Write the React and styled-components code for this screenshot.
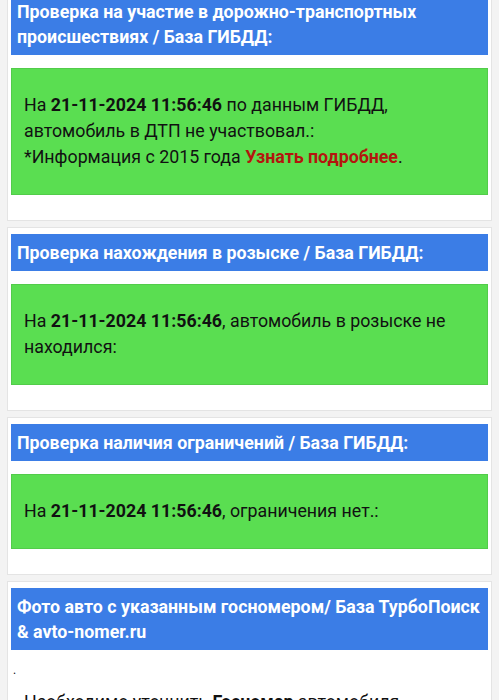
import React from 'react'
import styled, { createGlobalStyle } from 'styled-components'

const GlobalStyle = createGlobalStyle`
  html, body {
    margin: 0;
    padding: 0;
    background: #f3f3f3;
    font-family: Roboto, "Noto Sans", sans-serif;
    overflow: hidden;
  }
`

const Page = styled.div`
  display: flex;
  flex-direction: column;
  gap: 6px;
  padding: 0 7px;
  margin-top: -14px;
`

const Card = styled.section`
  background: #fff;
  border: 1px solid #e4e4e4;
  padding: 6px 3px 25px;
`

const Header = styled.h3`
  margin: 0;
  background: #3b7de6;
  color: #fff;
  font-size: 17.8px;
  font-weight: 700;
  line-height: 25px;
  padding: 6px 4px 6px 6px;
`

const Result = styled.div`
  margin-top: 13px;
  background: #5ade51;
  border: 1px solid #52cc4a;
  color: #111;
  font-size: 17.8px;
  line-height: 26px;
  padding: 23px 12px 24px;
`

const Plain = styled.div`
  color: #111;
  font-size: 17.8px;
  line-height: 26px;
  padding: 10px 2px 0;
`

const Dot = styled.div`
  font-size: 12px;
  line-height: 20px;
`

const Indented = styled.p`
  margin: 9px 0 0;
  padding-left: 11px;
`

const Link = styled.a`
  color: #b3160e;
  font-weight: 700;
  text-decoration: none;
`

const Stamp = () => <b>21-11-2024 11:56:46</b>

export default function App() {
  return (
    <>
      <GlobalStyle />
      <Page>
        <Card>
          <Header>Проверка на участие в дорожно-транспортных происшествиях / База ГИБДД:</Header>
          <Result>
            На <Stamp /> по данным ГИБДД, автомобиль в ДТП не участвовал.:
            <br />
            *Информация с 2015 года <Link href="#">Узнать подробнее</Link>.
          </Result>
        </Card>
        <Card>
          <Header>Проверка нахождения в розыске / База ГИБДД:</Header>
          <Result>
            На <Stamp />, автомобиль в розыске не находился:
          </Result>
        </Card>
        <Card>
          <Header>Проверка наличия ограничений / База ГИБДД:</Header>
          <Result>
            На <Stamp />, ограничения нет.:
          </Result>
        </Card>
        <Card>
          <Header>Фото авто с указанным госномером/ База ТурбоПоиск &amp; avto-nomer.ru</Header>
          <Plain>
            <Dot>.</Dot>
            <Indented>
              Необходимо уточнить <b>Госномер</b> автомобиля
            </Indented>
          </Plain>
        </Card>
      </Page>
    </>
  )
}
